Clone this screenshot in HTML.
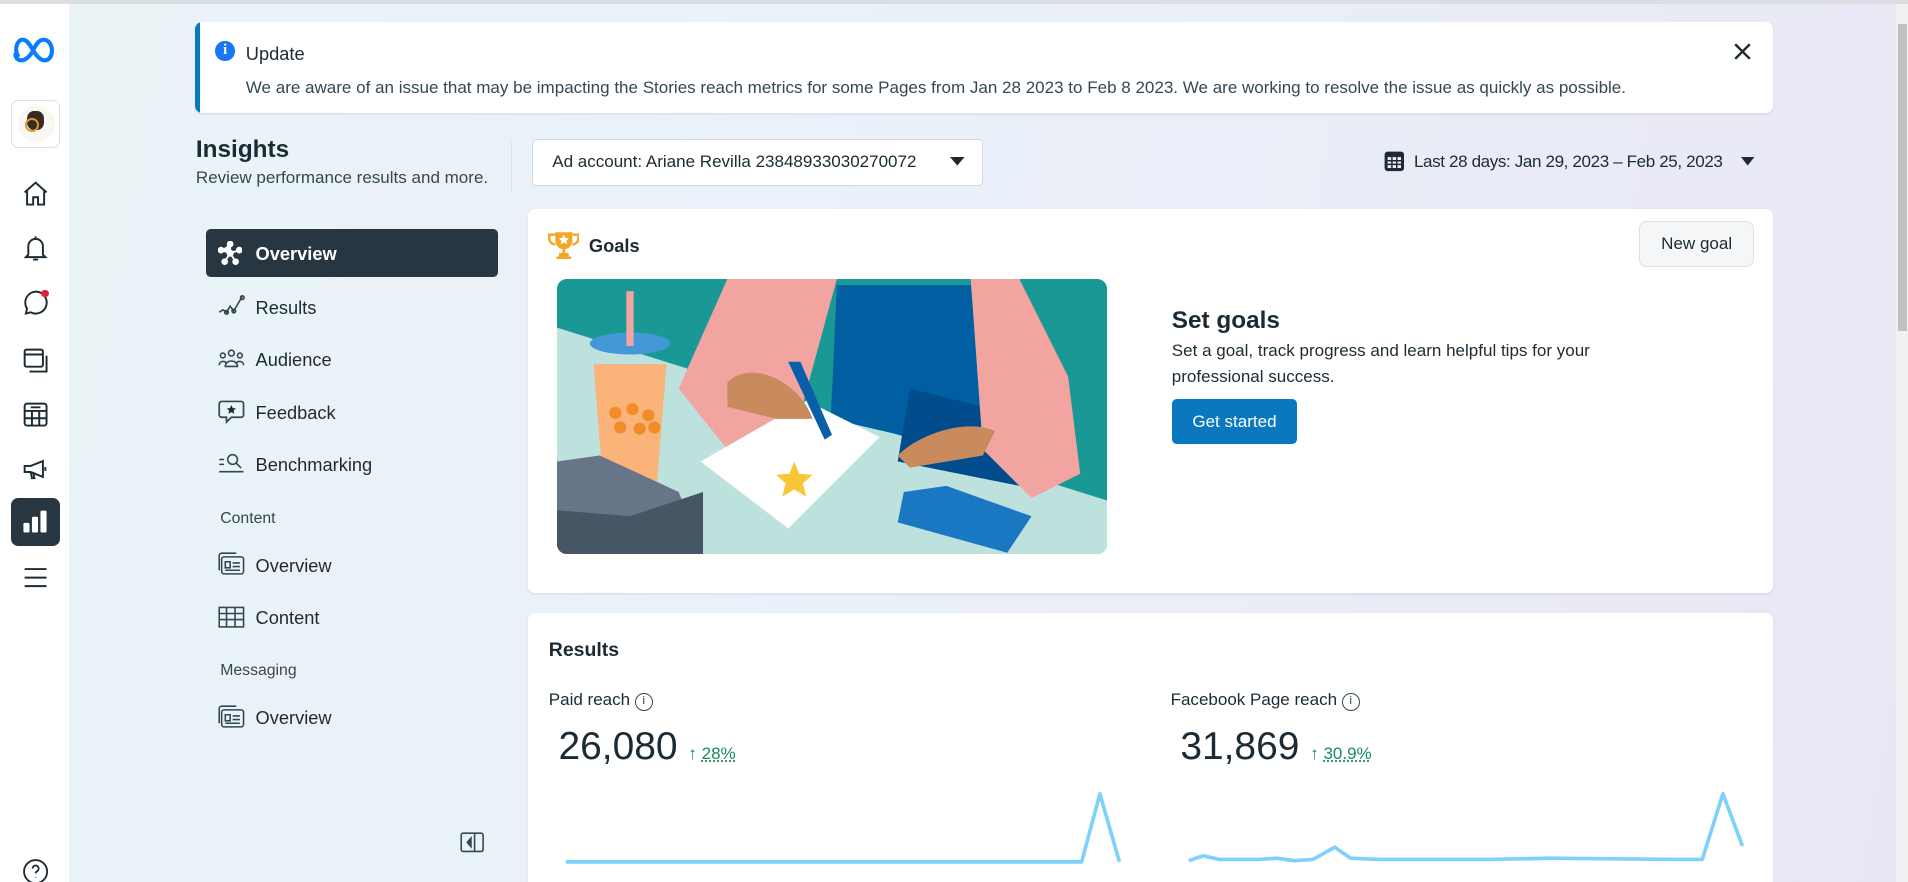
<!DOCTYPE html>
<html><head><meta charset="utf-8"><style>
html,body{margin:0;padding:0;overflow:hidden}
body{width:1908px;height:882px;font-family:"Liberation Sans",sans-serif;color:#1c2b33}
#w{zoom:1.21684;width:1568px;height:725px;position:relative;overflow:hidden;background:linear-gradient(100deg,#eaf4f6 0%,#eaf1fa 40%,#e9ecf6 75%,#ebe6f5 100%)}
.a{position:absolute}
#top{left:0;top:0;width:1568px;height:3px;background:#dadde1}
#side{left:0;top:3px;width:57px;height:722px;background:#fff}
.ic{position:absolute;left:17px;width:24px;height:24px}
.card{background:#fff;border-radius:6px;box-shadow:0 1px 2px rgba(0,0,0,.08)}
.nav{position:absolute;left:169px;width:240px;height:40px;font-size:15px;color:#1c2b33}
.nav span{position:absolute;left:41px;top:12px}
.nav svg{position:absolute;left:10px;top:10px}
.lbl{position:absolute;left:181px;font-size:13px;color:#344854}
</style></head><body><div id="w">
<div class="a" id="top"></div>
<div class="a" id="side">
 <svg class="a" style="left:11px;top:27px" width="36" height="22" viewBox="0 0 36 22"><path d="M4 16C1 12 3 3 8 3c5 0 8 9 10 11 2 3 5 6 8 6 4 0 6-4 6-8 0-5-3-9-7-9-5 0-8 8-9 10-2 3-5 7-9 7-3 0-5-2-5-5" fill="none" stroke="#0a7cff" stroke-width="3.4" stroke-linecap="round"/></svg>
 <div class="a" style="left:9px;top:79px;width:39px;height:38px;border:1px solid #dde1e5;border-radius:6px;background:#fff"><div class="a" style="left:5px;top:4px;width:30px;height:30px;border-radius:50%;background:#faf6f0"></div><div class="a" style="left:12px;top:8px;width:14px;height:16px;border-radius:40%;background:#3a2a22"></div><div class="a" style="left:11px;top:14px;width:8px;height:8px;border:2px solid #d99a30;border-radius:50%"></div></div>
 <svg class="ic" style="top:144px" viewBox="0 0 24 24" fill="none" stroke="#1c2b33" stroke-width="1.6"><path d="M3 11 12 3l9 8M5 10v11h5v-6h4v6h5V10"/></svg>
 <svg class="ic" style="top:189px" viewBox="0 0 24 24" fill="none" stroke="#1c2b33" stroke-width="1.6"><path d="M6 17V10a6 6 0 0 1 12 0v7l2 2H4zM10 21h4M12 2v2"/></svg>
 <svg class="ic" style="top:234px" viewBox="0 0 24 24" fill="none" stroke="#1c2b33" stroke-width="1.6"><path d="M12 3a9 9 0 1 1-4 17l-4 1 1-4A9 9 0 0 1 12 3z"/></svg>
 <div class="a" style="left:34px;top:235px;width:6px;height:6px;border-radius:50%;background:#e41e3f"></div>
 <svg class="ic" style="top:281px" viewBox="0 0 24 24" fill="none" stroke="#1c2b33" stroke-width="1.6"><rect x="3" y="3" width="15" height="14" rx="1.5"/><path d="M3 7h15M7 21h14V8"/></svg>
 <svg class="ic" style="top:326px" viewBox="0 0 24 24" fill="none" stroke="#1c2b33" stroke-width="1.6"><rect x="3" y="3" width="18" height="18" rx="2"/><path d="M3 9h18M3 15h18M9 9v12M15 9v12M8 6h8"/></svg>
 <svg class="ic" style="top:371px" viewBox="0 0 24 24" fill="none" stroke="#1c2b33" stroke-width="1.6"><path d="M3 9h5l10-4v13L8 14H3zM8 14l1 5h2l-1-5M20 10v3"/></svg>
 <div class="a" style="left:9px;top:406px;width:40px;height:40px;border-radius:6px;background:#283642"></div>
 <svg class="a" style="left:17px;top:414px" width="24" height="24" viewBox="0 0 24 24" fill="#fff"><rect x="2" y="13" width="5" height="8" rx="1"/><rect x="9" y="8" width="5" height="13" rx="1"/><rect x="16" y="3" width="5" height="18" rx="1"/></svg>
 <svg class="ic" style="top:460px" viewBox="0 0 24 24" fill="none" stroke="#1c2b33" stroke-width="1.6"><path d="M3 5h18M3 12h18M3 19h18"/></svg>
 <svg class="ic" style="top:701px" viewBox="0 0 24 24" fill="none" stroke="#1c2b33" stroke-width="1.5"><circle cx="12" cy="12" r="9.5"/><path d="M9.5 9.5a2.5 2.5 0 1 1 3.5 2.3c-.7.4-1 .9-1 1.7M12 16.5v.5"/></svg>
</div>
<div class="a" style="left:1558px;top:3px;width:10px;height:722px;background:#f1f1f1"></div>
<div class="a" style="left:1560px;top:20px;width:7px;height:252px;background:#c1c1c1"></div>
<div class="a card" style="left:160px;top:18px;width:1297px;height:75px;overflow:hidden">
 <div class="a" style="left:0;top:0;width:4px;height:75px;background:#0a78be"></div>
 <div class="a" style="left:17px;top:16px;width:16px;height:16px;border-radius:50%;background:#1a77f2;color:#fff;font-size:12px;font-weight:bold;text-align:center;line-height:16px;font-family:'Liberation Serif',serif">i</div>
 <div class="a" style="left:42px;top:17px;font-size:15px">Update</div>
 <div class="a" style="left:42px;top:46px;font-size:14px;color:#344854">We are aware of an issue that may be impacting the Stories reach metrics for some Pages from Jan 28 2023 to Feb 8 2023. We are working to resolve the issue as quickly as possible.</div>
 <svg class="a" style="left:1265px;top:17px" width="14" height="14" viewBox="0 0 14 14" stroke="#1c2b33" stroke-width="2"><path d="M1 1l12 12M13 1 1 13"/></svg>
</div>
<div class="a" style="left:161px;top:112px;font-size:20px;font-weight:bold">Insights</div>
<div class="a" style="left:161px;top:138px;font-size:14px;color:#344854">Review performance results and more.</div>
<div class="a" style="left:420px;top:117px;width:1px;height:40px;background:#dde1e5"></div>
<div class="a" style="left:437px;top:114px;width:369px;height:37px;background:#fff;border:1px solid #d4d9de;border-radius:4px"><span class="a" style="left:16px;top:10px;font-size:14px">Ad account: Ariane Revilla 23848933030270072</span><svg class="a" style="left:343px;top:14px" width="12" height="8"><path d="M0 0h12L6 7z" fill="#1c2b33"/></svg></div>
<svg class="a" style="left:1137px;top:124px" width="17" height="17" viewBox="0 0 17 17"><rect x="0.5" y="0.5" width="16" height="16" rx="2.5" fill="#1c2b33"/><path d="M3 5h11v9H3z" fill="#eef" /><path d="M3 8h11M3 11h11M6.5 5v9M10.5 5v9" stroke="#1c2b33" stroke-width="1.2"/></svg>
<div class="a" style="left:1162px;top:125px;font-size:14px;letter-spacing:-0.3px">Last 28 days: Jan 29, 2023 – Feb 25, 2023</div>
<svg class="a" style="left:1431px;top:129px" width="11" height="8"><path d="M0 0h11L5.5 7z" fill="#1c2b33"/></svg>
<div class="nav" style="top:188px;background:#283642;border-radius:4px;color:#fff;font-weight:bold"><svg width="20" height="20" viewBox="0 0 20 20" fill="#fff" stroke="#fff" stroke-width="1.5"><circle cx="10" cy="10" r="2.2"/><circle cx="10" cy="2.5" r="2"/><circle cx="2.5" cy="7.5" r="2"/><circle cx="17.5" cy="7.5" r="2"/><circle cx="5.5" cy="17" r="2"/><circle cx="14.5" cy="17" r="2"/><path d="M10 2.5v7.5L2.5 7.5M10 10l7.5-2.5M10 10l-4.5 7M10 10l4.5 7"/></svg><span>Overview</span></div>
<div class="nav" style="top:232px"><svg width="22" height="20" viewBox="0 0 22 20" fill="none" stroke="#344854" stroke-width="1.3"><path d="M1 15l3-2 3 2 3-5 3 4 4-7 3-5"/><circle cx="7" cy="15" r="1.5"/><circle cx="13" cy="14" r="1.5"/><circle cx="20" cy="3" r="1.5"/></svg><span>Results</span></div>
<div class="nav" style="top:275px"><svg width="22" height="20" viewBox="0 0 22 20" fill="none" stroke="#344854" stroke-width="1.3"><circle cx="4" cy="7" r="2"/><circle cx="11" cy="5" r="2.4"/><circle cx="18" cy="7" r="2"/><path d="M1 15c0-4 6-4 6-1M15 14c0-3 6-3 6 1M6 16c0-6 10-6 10 0z"/></svg><span>Audience</span></div>
<div class="nav" style="top:318px"><svg width="22" height="22" viewBox="0 0 22 22" fill="none" stroke="#344854" stroke-width="1.4"><path d="M3 2h16a2 2 0 0 1 2 2v9a2 2 0 0 1-2 2h-8l-4 4v-4H3a2 2 0 0 1-2-2V4a2 2 0 0 1 2-2z"/><path d="M11 5l1.2 2.5 2.6.3-2 1.8.6 2.6-2.4-1.4-2.4 1.4.6-2.6-2-1.8 2.6-.3z" fill="#1c2b33" stroke="none"/></svg><span>Feedback</span></div>
<div class="nav" style="top:361px"><svg width="22" height="20" viewBox="0 0 22 20" fill="none" stroke="#344854" stroke-width="1.3"><path d="M1 7h4M1 11h4M1 17h20"/><circle cx="12" cy="7" r="4"/><path d="M15 10l4 4"/></svg><span>Benchmarking</span></div>
<div class="lbl" style="top:419px">Content</div>
<div class="nav" style="top:444px"><svg width="22" height="20" viewBox="0 0 22 20" fill="none" stroke="#344854" stroke-width="1.3"><rect x="3" y="4" width="18" height="14" rx="2"/><path d="M1 15V3a2 2 0 0 1 2-2h12M6 8h4v5H6zM12 9h6M12 12h6M6 15h12"/></svg><span>Overview</span></div>
<div class="nav" style="top:487px"><svg width="22" height="20" viewBox="0 0 22 20" fill="none" stroke="#344854" stroke-width="1.3"><rect x="1" y="2" width="20" height="16"/><path d="M1 7h20M1 12h20M7 2v16M14 2v16"/></svg><span>Content</span></div>
<div class="lbl" style="top:544px">Messaging</div>
<div class="nav" style="top:569px"><svg width="22" height="20" viewBox="0 0 22 20" fill="none" stroke="#344854" stroke-width="1.3"><rect x="3" y="4" width="18" height="14" rx="2"/><path d="M1 15V3a2 2 0 0 1 2-2h12M6 8h4v5H6zM12 9h6M12 12h6M6 15h12"/></svg><span>Overview</span></div>
<svg class="a" style="left:378px;top:684px" width="20" height="17" viewBox="0 0 20 17" fill="none" stroke="#344854" stroke-width="1.3"><rect x="1" y="1" width="18" height="15" rx="1.5"/><path d="M12 1v15"/><path d="M9 5l-3 3.5L9 12z" fill="#344854"/></svg>
<div class="a card" style="left:434px;top:172px;width:1023px;height:315px">
 <svg class="a" style="left:16px;top:18px" width="26" height="24" viewBox="0 0 26 24"><path d="M6 1h14v7a7 7 0 0 1-14 0z" fill="#f5a623"/><path d="M6 3H1v3a5 5 0 0 0 5 5M20 3h5v3a5 5 0 0 1-5 5" fill="none" stroke="#f5a623" stroke-width="2"/><path d="M12 13h2v5h-2z M7 21h12v2H7z M9 18h8v3H9z" fill="#f5a623"/><path d="M13 3l1.3 2.6 2.8.4-2 2 .5 2.8-2.6-1.4-2.6 1.4.5-2.8-2-2 2.8-.4z" fill="#fff"/></svg>
 <div class="a" style="left:50px;top:21px;font-size:15px;font-weight:bold">Goals</div>
 <div class="a" style="left:913px;top:10px;width:93px;height:36px;border:1px solid #dde1e5;border-radius:6px;background:#f5f6f7;font-size:14px;text-align:center;line-height:36px">New goal</div>
 <svg class="a" style="left:24px;top:57px;border-radius:8px" width="452" height="226" viewBox="0 0 452 226">
  <rect width="452" height="226" fill="#1a9896"/>
  <path d="M0 40 452 182V226H0z" fill="#bde1dc"/>
  <path d="M230 5h110l15 140-130-30z" fill="#015fa1"/>
  <path d="M290 90l80 20 10 60-100-20z" fill="#004c8c"/>
  <path d="M140 0h90l-30 110-60 30-40-50z" fill="#f2a5a0"/>
  <path d="M340 0h40l40 80 10 80-40 20-40-40z" fill="#f2a5a0"/>
  <path d="M118 150 205 100 265 130 190 205z" fill="#fff"/>
  <path d="M195 150l4 10 11 1-8 7 3 11-10-6-10 6 3-11-8-7 11-1z" fill="#f8c736"/>
  <path d="M140 85c20-20 60 0 70 30l-30 0-40-10z" fill="#c98b5e"/>
  <path d="M280 145c20-20 60-30 80-20l-10 20-60 10z" fill="#c98b5e"/>
  <path d="M190 68l10 0 26 60-6 4z" fill="#0a5faa"/>
  <path d="M285 175 320 170 390 195 370 225 280 200z" fill="#1a78c2"/>
  <path d="M30 70h60l-8 100h-44z" fill="#fab47a"/>
  <ellipse cx="60" cy="53" rx="33" ry="9" fill="#4399d7"/>
  <rect x="57" y="10" width="6" height="45" fill="#f2a5a0"/>
  <g fill="#f28c28"><circle cx="48" cy="110" r="5"/><circle cx="62" cy="107" r="5"/><circle cx="75" cy="112" r="5"/><circle cx="52" cy="122" r="5"/><circle cx="68" cy="123" r="5"/><circle cx="80" cy="122" r="5"/></g>
  <path d="M0 150 35 145 100 175 120 226H0z" fill="#667587"/>
  <path d="M0 190 60 195 120 175 120 226H0z" fill="#475665"/>
 </svg>
 <div class="a" style="left:529px;top:80px;font-size:20px;font-weight:bold">Set goals</div>
 <div class="a" style="left:529px;top:106px;font-size:14px;line-height:21px;width:370px;color:#1c2b33">Set a goal, track progress and learn helpful tips for your professional success.</div>
 <div class="a" style="left:529px;top:156px;width:103px;height:37px;border-radius:4px;background:#0a78be;color:#fff;font-size:14px;text-align:center;line-height:37px">Get started</div>
</div>
<div class="a card" style="left:434px;top:504px;width:1023px;height:240px">
 <div class="a" style="left:17px;top:21px;font-size:16px;font-weight:bold">Results</div>
 <div class="a" style="left:17px;top:63px;font-size:14px">Paid reach <span style="display:inline-block;width:13px;height:13px;border:1px solid #344854;border-radius:50%;font-size:9px;text-align:center;line-height:13px;vertical-align:1px">i</span></div>
 <div class="a" style="left:25px;top:92px;font-size:32px">26,080 <span style="font-size:14px;color:#1a8a5a">↑ <u style="text-decoration-style:dotted">28%</u></span></div>
 <div class="a" style="left:528px;top:63px;font-size:14px">Facebook Page reach <span style="display:inline-block;width:13px;height:13px;border:1px solid #344854;border-radius:50%;font-size:9px;text-align:center;line-height:13px;vertical-align:1px">i</span></div>
 <div class="a" style="left:536px;top:92px;font-size:32px">31,869 <span style="font-size:14px;color:#1a8a5a">↑ <u style="text-decoration-style:dotted">30.9%</u></span></div>
 <svg class="a" style="left:0;top:140px" width="1023" height="80" fill="none" stroke="#7fd0fa" stroke-width="3" stroke-linejoin="round">
  <path d="M31 64H455L470 8 486 64"/>
  <path d="M543 63 555 59 568 62 600 62 615 61 630 63 645 62 663 52 676 61 700 62 790 62 840 61 950 62 965 62 982 8 998 51"/>
 </svg>
</div>
</div></body></html>
